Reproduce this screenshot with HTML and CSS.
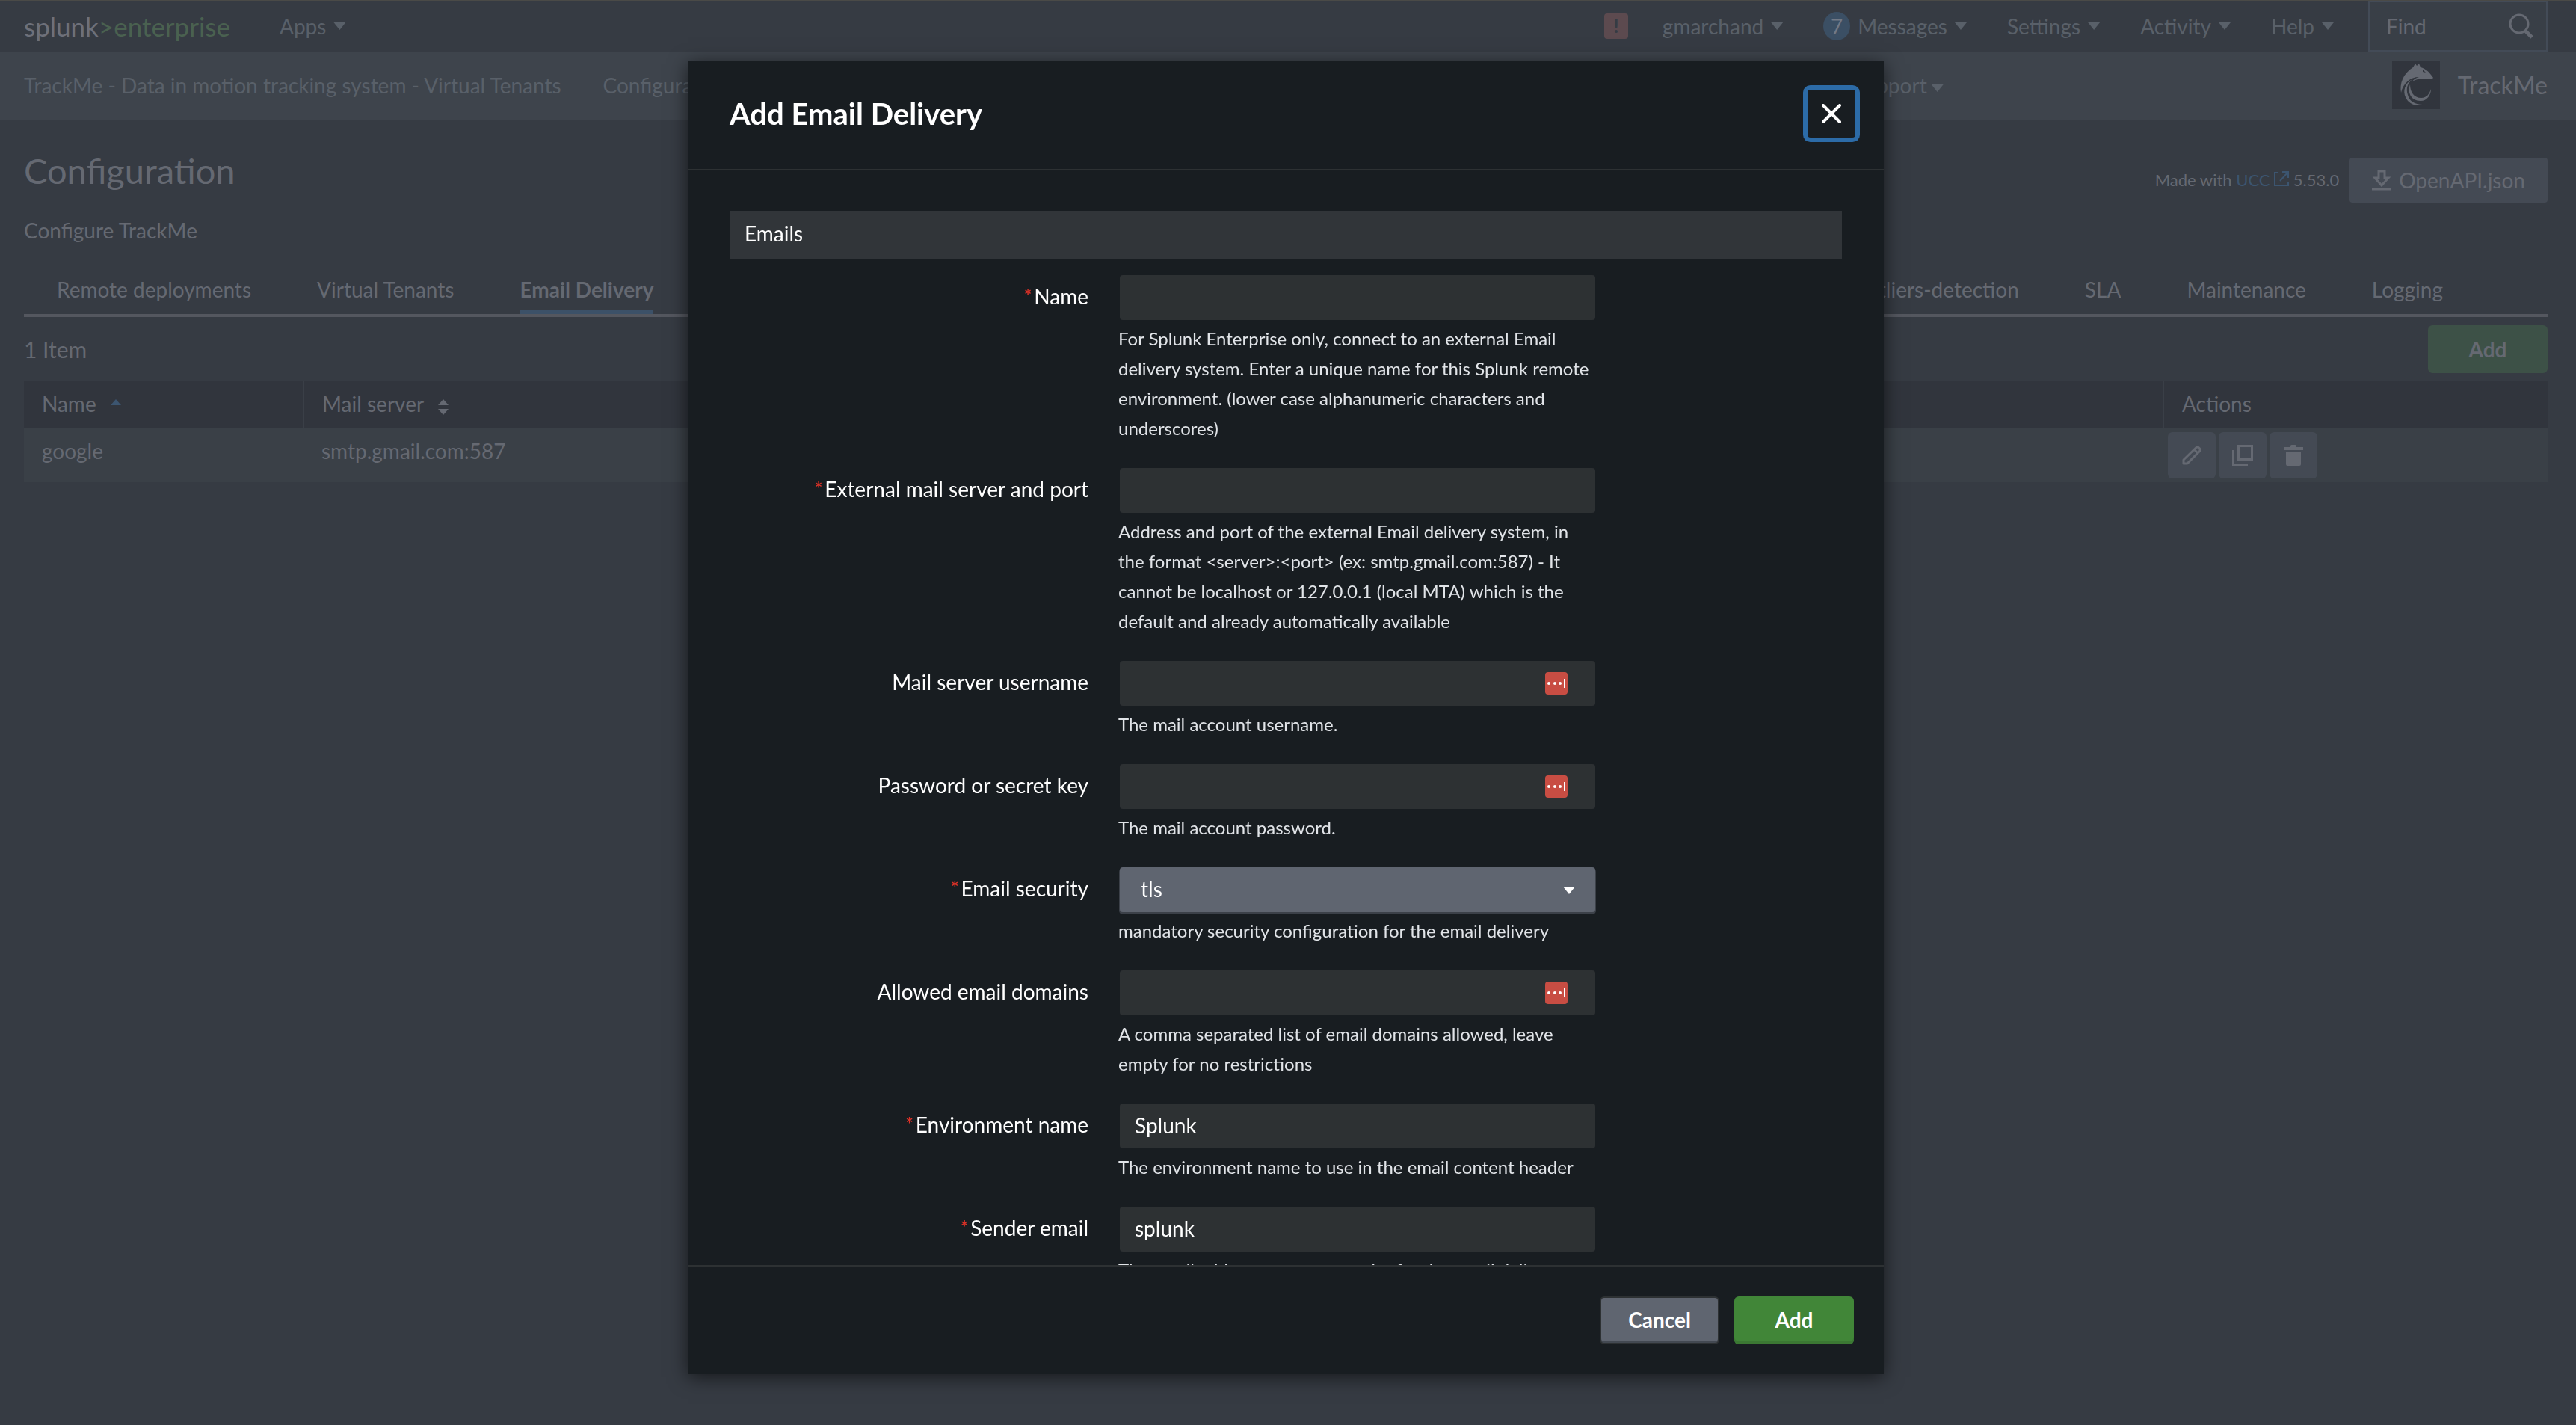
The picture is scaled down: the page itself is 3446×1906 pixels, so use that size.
FILE: index.html
```html
<!DOCTYPE html>
<html lang="en">
<head>
  <meta charset="UTF-8">
  <title>Configuration | TrackMe</title>
  <link rel="stylesheet" href="styles.css">
</head>
<body>

  <header class="topbar">
    <a class="brand" href="#">splunk<span class="brand-sub">&gt;enterprise</span></a>
    <a class="menu" href="#">Apps <span class="caret"></span></a>
    <nav class="top-right">
      <a class="alert" href="#" aria-label="Health">!</a>
      <a class="menu" href="#">gmarchand <span class="caret"></span></a>
      <a class="menu messages" href="#"><span class="count">7</span>Messages <span class="caret"></span></a>
      <a class="menu" href="#">Settings <span class="caret"></span></a>
      <a class="menu" href="#">Activity <span class="caret"></span></a>
      <a class="menu" href="#">Help <span class="caret"></span></a>
    </nav>
    <div class="find">
      <input type="text" placeholder="Find" aria-label="Find">
      <svg width="34" height="34" viewBox="0 0 34 34" fill="none" stroke="currentColor">
        <circle cx="14" cy="14" r="12" stroke-width="3"/>
        <path d="M22 23l9 9" stroke-width="5"/>
      </svg>
    </div>
  </header>

  <nav class="appbar">
    <a href="#">TrackMe - Data in motion tracking system - Virtual Tenants</a>
    <a href="#">Configuration</a>
    <a class="support" href="#">Support<span class="caret"></span></a>
    <span class="app-logo">
      <svg width="64" height="64" viewBox="0 0 64 64" fill="currentColor">
        <path d="M12 42C10 30 14 17 28 8L31 3L33 6L36 3L38 8C45 10 49 14 52 18L55 22L53 24C43 22 33 23 27 27C29 24 32 22 36 21C24 21 15 29 12 42Z"/>
        <path d="M27 24C17 29 14 40 18 48C22 57 31 61 41 58C30 58 23 53 21 45C18 36 21 29 27 24Z"/>
        <path d="M24 31C20 41 25 53 38 53C47 53 52 45 52 37C50 44 46 49 39 49C29 49 24 41 24 31Z"/>
        <path d="M41 11l4 4l-4-1z" fill="#31353d"/>
      </svg>
    </span>
    <span class="app-name">TrackMe</span>
  </nav>

  <main class="page">
    <div class="page-head">
      <div>
        <h1>Configuration</h1>
        <p class="subtitle">Configure TrackMe</p>
      </div>
      <div class="build">
        <span>Made with <a href="#">UCC
          <svg width="20" height="20" viewBox="0 0 20 20" fill="none" stroke="currentColor" stroke-width="2">
            <path d="M6 2H1v17h18v-5M11 1h8v8M19 1L8 13"/>
          </svg></a> 5.53.0</span>
        <button class="btn-dim" type="button">
          <svg width="26" height="28" viewBox="0 0 26 28" fill="none" stroke="currentColor" stroke-width="3">
            <path d="M9 2h8v9h5l-9 10l-9-10h5zM0 26h26"/>
          </svg>
          OpenAPI.json
        </button>
      </div>
    </div>

    <nav class="tabs">
      <a href="#">Remote deployments</a>
      <a href="#">Virtual Tenants</a>
      <a class="active" href="#">Email Delivery</a>
      <a class="push" href="#">Outliers-detection</a>
      <a href="#">SLA</a>
      <a href="#">Maintenance</a>
      <a href="#">Logging</a>
    </nav>

    <div class="list-head">
      <span>1 Item</span>
      <button class="btn-add-dim" type="button">Add</button>
    </div>

    <table>
      <thead>
        <tr>
          <th class="col-name">Name
            <svg class="sort sort-on" width="14" height="26" viewBox="0 0 14 26" fill="currentColor"><path d="M7 3l7 8H0z"/></svg>
          </th>
          <th>Mail server
            <svg class="sort" width="14" height="26" viewBox="0 0 14 26" fill="currentColor"><path d="M7 3l7 8H0zM0 16h14l-7 8z"/></svg>
          </th>
          <th class="col-actions">Actions</th>
        </tr>
      </thead>
      <tbody>
        <tr>
          <td>google</td>
          <td>smtp.gmail.com:587</td>
          <td class="actions">
            <div class="action-list">
              <button type="button" aria-label="Edit">
                <svg width="28" height="28" viewBox="0 0 28 28" fill="none" stroke="currentColor" stroke-width="3" stroke-linejoin="round">
                  <path d="M3 20L20 3.500C22 1.500 27 6 24.500 8.500L8 25H3zM17 6l5 5"/>
                </svg>
              </button>
              <button type="button" aria-label="Clone">
                <svg width="28" height="28" viewBox="0 0 28 28" fill="none" stroke="currentColor">
                  <path d="M8.500 1.500h18v18h-18z" stroke-width="3"/>
                  <path d="M1.500 7v19.500H21" stroke-width="3"/>
                </svg>
              </button>
              <button type="button" aria-label="Delete">
                <svg width="26" height="28" viewBox="0 0 26 28" fill="currentColor">
                  <path d="M0 3h9V1.500Q9 0 10.500 0h5Q17 0 17 1.500V3h9v4H0zM3 10h20v16q0 2-2 2H5q-2 0-2-2z"/>
                </svg>
              </button>
            </div>
          </td>
        </tr>
      </tbody>
    </table>
  </main>

  <div class="overlay">
    <form class="modal" role="dialog" aria-labelledby="modal-title">
      <div class="modal-header">
        <h2 id="modal-title">Add Email Delivery</h2>
        <button class="close" type="button" aria-label="Close">
          <svg width="26" height="26" viewBox="0 0 26 26" stroke="currentColor" stroke-width="4" stroke-linecap="round">
            <path d="M2 2l22 22M24 2L2 24"/>
          </svg>
        </button>
      </div>

      <div class="modal-body">
        <h3>Emails</h3>

        <div class="row">
          <label for="name"><span class="req">*</span>Name</label>
          <div class="field">
            <input type="text" id="name">
            <p>For Splunk Enterprise only, connect to an external Email delivery system. Enter a unique name for this Splunk remote environment. (lower case alphanumeric characters and underscores)</p>
          </div>
        </div>

        <div class="row">
          <label for="server"><span class="req">*</span>External mail server and port</label>
          <div class="field">
            <input type="text" id="server">
            <p>Address and port of the external Email delivery system, in the format &lt;server&gt;:&lt;port&gt; (ex: smtp.gmail.com:587) - It cannot be localhost or 127.0.0.1 (local MTA) which is the default and already automatically available</p>
          </div>
        </div>

        <div class="row">
          <label for="username">Mail server username</label>
          <div class="field">
            <input type="text" id="username">
            <svg class="pass-icon" width="30" height="30" viewBox="0 0 30 30"><rect width="30" height="30" rx="4" fill="#c84d43"/><g fill="#fff"><circle cx="5" cy="15" r="2"/><circle cx="13" cy="15" r="2"/><circle cx="20" cy="15" r="2"/><path d="M25 9h2v12h-2z"/></g></svg>
            <p>The mail account username.</p>
          </div>
        </div>

        <div class="row">
          <label for="password">Password or secret key</label>
          <div class="field">
            <input type="password" id="password">
            <svg class="pass-icon" width="30" height="30" viewBox="0 0 30 30"><rect width="30" height="30" rx="4" fill="#c84d43"/><g fill="#fff"><circle cx="5" cy="15" r="2"/><circle cx="13" cy="15" r="2"/><circle cx="20" cy="15" r="2"/><path d="M25 9h2v12h-2z"/></g></svg>
            <p>The mail account password.</p>
          </div>
        </div>

        <div class="row">
          <label for="security"><span class="req">*</span>Email security</label>
          <div class="field">
            <select id="security">
              <option>tls</option>
              <option>ssl</option>
              <option>none</option>
            </select>
            <span class="caret select-caret"></span>
            <p>mandatory security configuration for the email delivery</p>
          </div>
        </div>

        <div class="row">
          <label for="domains">Allowed email domains</label>
          <div class="field">
            <input type="text" id="domains">
            <svg class="pass-icon" width="30" height="30" viewBox="0 0 30 30"><rect width="30" height="30" rx="4" fill="#c84d43"/><g fill="#fff"><circle cx="5" cy="15" r="2"/><circle cx="13" cy="15" r="2"/><circle cx="20" cy="15" r="2"/><path d="M25 9h2v12h-2z"/></g></svg>
            <p>A comma separated list of email domains allowed, leave empty for no restrictions</p>
          </div>
        </div>

        <div class="row">
          <label for="environment"><span class="req">*</span>Environment name</label>
          <div class="field">
            <input type="text" id="environment" value="Splunk">
            <p>The environment name to use in the email content header</p>
          </div>
        </div>

        <div class="row">
          <label for="sender"><span class="req">*</span>Sender email</label>
          <div class="field">
            <input type="text" id="sender" value="splunk">
            <p>The email address to use as sender for the email delivery</p>
          </div>
        </div>
      </div>

      <div class="modal-footer">
        <button class="btn-cancel" type="button">Cancel</button>
        <button class="btn-add" type="submit">Add</button>
      </div>
    </form>
  </div>

</body>
</html>
```

FILE: styles.css
```css
* {
  box-sizing: border-box;
}

body {
  margin: 0;
  min-height: 100vh;
  font-family: Lato, "Open Sans", sans-serif;
  font-size: 28px;
  line-height: 40px;
  background: #363b43;
  color: #656972;
}

a {
  color: inherit;
  text-decoration: none;
}

button, input, select {
  font: inherit;
  color: inherit;
}

button {
  cursor: pointer;
}

h1, h2, h3, p {
  margin: 0;
}

.caret {
  display: inline-block;
  width: 16px;
  height: 10px;
  background: currentColor;
  clip-path: polygon(0 0, 100% 0, 50% 100%);
}

/* top bar */
.topbar {
  display: flex;
  align-items: center;
  height: 70px;
  padding: 0 38px 2px 32px;
  border-top: 2px solid #4a4a47;
  color: #596069;
}

.brand {
  font-size: 35px;
  color: #6d707a;
}

.brand-sub {
  color: #4a6150;
}

.menu {
  display: flex;
  align-items: center;
  gap: 10px;
}

.brand + .menu {
  margin-left: 66px;
}

.top-right {
  display: flex;
  align-items: center;
  gap: 54px;
  margin-left: auto;
}

.alert {
  width: 32px;
  height: 34px;
  margin-right: -8px;
  border-radius: 4px;
  background: #5c4a4f;
  color: #363b43;
  font-size: 24px;
  font-weight: 900;
  line-height: 34px;
  text-align: center;
}

.count {
  width: 36px;
  height: 38px;
  border-radius: 50%;
  background: #3b4f64;
  color: #727986;
  line-height: 38px;
  text-align: center;
}

.find {
  display: flex;
  align-items: center;
  width: 240px;
  height: 68px;
  margin-left: 46px;
  padding: 0 16px 0 22px;
  border: 2px solid #434b57;
  background: #393f47;
  color: #656972;
}

.find input {
  flex: 1;
  min-width: 0;
  padding: 0;
  border: none;
  background: none;
}

.find input::placeholder {
  color: #656972;
  opacity: 1;
}

/* app bar */
.appbar {
  display: flex;
  align-items: center;
  height: 90px;
  padding: 0 38px 2px 32px;
  background: #3e444c;
  color: #596069;
}

.appbar a + a {
  margin-left: 56px;
}

.appbar .support {
  margin-left: auto;
}

.support .caret {
  margin-left: 6px;
  vertical-align: middle;
}

.app-logo {
  width: 64px;
  height: 64px;
  margin-left: 600px;
  background: #31353d;
  color: #656972;
}

.app-logo svg {
  display: block;
}

.app-name {
  margin-left: 24px;
  font-size: 32px;
  color: #656972;
}

/* page */
.page {
  padding: 38px 38px 0 32px;
}

.page-head {
  display: flex;
  justify-content: space-between;
}

h1 {
  font-size: 47px;
  font-weight: 400;
  line-height: 60px;
}

.subtitle {
  margin-top: 30px;
}

.build {
  display: flex;
  align-items: center;
  gap: 14px;
  height: 86px;
  font-size: 22px;
}

.build a {
  color: #3c5570;
}

.btn-dim {
  display: flex;
  align-items: center;
  gap: 10px;
  height: 60px;
  padding: 0 30px;
  border: none;
  border-radius: 4px;
  background: #444a54;
  font-size: 28px;
}

.tabs {
  display: flex;
  margin-top: 39px;
  padding: 0 140px 0 44px;
  gap: 88px;
  border-bottom: 4px solid #54575f;
}

.tabs a {
  padding-bottom: 13px;
}

.tabs .active {
  padding-bottom: 8px;
  border-bottom: 5px solid #3c5168;
  font-weight: 700;
}

.tabs .push {
  margin-left: auto;
}

.list-head {
  display: flex;
  align-items: center;
  justify-content: space-between;
  height: 85px;
  font-size: 30px;
}

.btn-add-dim {
  width: 160px;
  height: 64px;
  border: none;
  border-radius: 6px;
  background: #3d5147;
  font-size: 28px;
  font-weight: 700;
}

table {
  width: 100%;
  border-collapse: collapse;
  table-layout: fixed;
}

th {
  height: 64px;
  padding: 0 24px 2px;
  border-left: 2px solid #3a3f47;
  background: #31353d;
  font-weight: 400;
  text-align: left;
}

th:first-child {
  border-left: none;
}

.col-name {
  width: 374px;
}

.col-actions {
  width: 514px;
}

.sort {
  margin-left: 12px;
  vertical-align: middle;
}

.sort-on {
  color: #3c5570;
}

td {
  height: 72px;
  padding: 0 22px 12px 24px;
  background: #3a4047;
}

.actions {
  padding: 0 6px;
}

.action-list {
  display: flex;
  gap: 4px;
}

.action-list button {
  display: flex;
  align-items: center;
  justify-content: center;
  width: 64px;
  height: 62px;
  padding: 0;
  border: none;
  border-radius: 6px;
  background: #444a54;
}

/* modal */
.overlay {
  position: fixed;
  inset: 0;
  display: flex;
  justify-content: center;
  padding: 82px 6px 68px 0;
}

.modal {
  display: flex;
  flex-direction: column;
  width: 1600px;
  max-width: 100%;
  background: #181d21;
  color: #fff;
  box-shadow: 0 4px 24px rgba(0, 0, 0, 0.6);
}

.modal-header {
  display: flex;
  align-items: center;
  justify-content: space-between;
  height: 146px;
  padding: 0 38px 4px 56px;
  border-bottom: 2px solid #2d3133;
}

h2 {
  font-size: 40px;
  font-weight: 700;
  line-height: 48px;
}

.close {
  display: flex;
  align-items: center;
  justify-content: center;
  width: 64px;
  height: 64px;
  padding: 0;
  border: none;
  border-radius: 4px;
  background: none;
  box-shadow: 0 0 0 6px #2c6ba7;
}

.modal-body {
  flex: 1;
  min-height: 0;
  padding: 54px 56px 0;
  overflow: hidden;
}

h3 {
  margin-bottom: 22px;
  padding: 10px 20px 14px;
  background: #313539;
  font-size: 28px;
  font-weight: 400;
}

.row {
  display: flex;
  gap: 40px;
  margin-bottom: 33px;
}

.row label {
  width: 480px;
  line-height: 56px;
  text-align: right;
}

.req {
  margin-right: 3px;
  color: #dc3127;
  font-weight: 700;
  font-size: 24px;
  vertical-align: 2px;
  line-height: 1;
}

.field {
  position: relative;
  width: 638px;
  padding-left: 2px;
}

.field input {
  display: block;
  width: 100%;
  height: 60px;
  padding: 0 20px 2px;
  border: none;
  border-radius: 4px;
  background: #2d3133;
}

.field select {
  display: block;
  appearance: none;
  width: 100%;
  height: 60px;
  padding: 0 28px 2px;
  border: none;
  border-radius: 4px;
  background: #5f6570;
  box-shadow: 0 2px 0 1px #3c4149;
}

.pass-icon {
  position: absolute;
  top: 15px;
  right: 37px;
}

.select-caret {
  position: absolute;
  top: 26px;
  right: 27px;
}

.field p {
  margin: 5px 0 0 -2px;
  color: #e1e4e8;
  font-size: 24px;
}

.modal-footer {
  display: flex;
  justify-content: flex-end;
  gap: 20px;
  height: 146px;
  padding: 40px 40px 0;
  border-top: 2px solid #2d3133;
}

.modal-footer button {
  width: 160px;
  height: 64px;
  padding-bottom: 4px;
  border: none;
  border-radius: 6px;
  font-weight: 700;
}

.modal-footer .btn-cancel {
  border: 2px solid #2d3133;
  background: #5f6570;
  box-shadow: inset 0 -2px 0 #434952;
}

.btn-add {
  background: #418638;
  box-shadow: inset 0 -4px 0 #3b7833;
}
```
